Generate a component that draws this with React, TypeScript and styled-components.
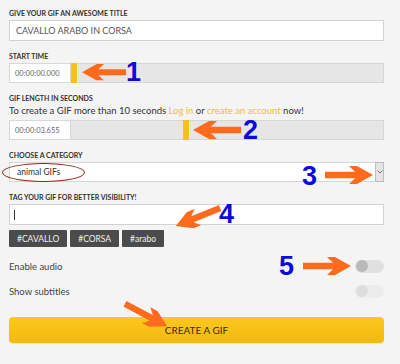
import styled, { createGlobalStyle } from "styled-components";

const GlobalStyle = createGlobalStyle`
  body {
    margin: 0;
    background: #f4f4f4;
    font-family: "Lato", "Open Sans", sans-serif;
  }
`;

const App = () => {
  return (
    <Page>
      <GlobalStyle />
      <Field>
        <Label>Give your GIF an awesome title</Label>
        <TextBox>CAVALLO ARABO IN CORSA</TextBox>
      </Field>

      <Field>
        <Label>Start time</Label>
        <SliderRow>
          <TimeBox>00:00:00.000</TimeBox>
          <Track>
            <Handle $left={0} />
          </Track>
        </SliderRow>
      </Field>

      <Field>
        <Label>GIF length in seconds</Label>
        <Helper>
          To create a GIF more than 10 seconds <Link>Log in</Link> or <Link>create an account</Link> now!
        </Helper>
        <SliderRow>
          <TimeBox>00:00:03.655</TimeBox>
          <Track>
            <Handle $left={112} />
          </Track>
        </SliderRow>
      </Field>

      <Field>
        <Label>Choose a category</Label>
        <SelectBox>
          <span>animal GIFs</span>
          <DropButton>
            <svg width="6" height="4" viewBox="0 0 6 4">
              <path d="M0.5 0.5 L3 3 L5.5 0.5" fill="none" stroke="#777" strokeWidth="1" />
            </svg>
          </DropButton>
        </SelectBox>
      </Field>

      <Field>
        <Label>Tag your GIF for better visibility!</Label>
        <TextBox>
          <Caret />
        </TextBox>
        <TagList>
          <Tag>#CAVALLO</Tag>
          <Tag>#CORSA</Tag>
          <Tag>#arabo</Tag>
        </TagList>
      </Field>

      <Options>
        <OptionRow>
          Enable audio
          <Toggle>
            <Knob />
          </Toggle>
        </OptionRow>
        <OptionRow>
          Show subtitles
          <Toggle $disabled>
            <Knob $disabled />
          </Toggle>
        </OptionRow>
      </Options>

      <CreateButton>CREATE A GIF</CreateButton>

      {/* annotations drawn on top of the screenshot */}
      <Ellipse />
      <Arrow $cx={104} $cy={72} $len={44} $angle={180} />
      <Num $x={126} $y={57}>1</Num>
      <Arrow $cx={217} $cy={130} $len={48} $angle={180} />
      <Num $x={243} $y={115}>2</Num>
      <Num $x={302} $y={161}>3</Num>
      <Arrow $cx={349} $cy={175} $len={48} $angle={0} />
      <Arrow $cx={198} $cy={217} $len={48} $angle={158} />
      <Num $x={219} $y={199}>4</Num>
      <Num $x={279} $y={251}>5</Num>
      <Arrow $cx={327} $cy={266} $len={48} $angle={0} />
      <Arrow $cx={146} $cy={315} $len={48} $angle={28} />
    </Page>
  );
};

const Arrow = ({ $cx, $cy, $len, $angle }: { $cx: number; $cy: number; $len: number; $angle: number }) => (
  <ArrowSvg $cx={$cx} $cy={$cy} $len={$len} $angle={$angle} viewBox="0 0 48 18" width={$len} height={($len * 18) / 48}>
    <path d="M0 5.8 H30 L24 0 H32 L48 9 L32 18 H24 L30 12.2 H0 Z" fill="#ff6a1c" />
  </ArrowSvg>
);

export default App;

const Page = styled.div`
  position: relative;
  box-sizing: border-box;
  width: 400px;
  height: 364px;
  padding: 9px 16px 0 9px;
  background: #f4f4f4;
  overflow: hidden;
  display: flex;
  flex-direction: column;
  gap: 11px;
`;

const Field = styled.div`
  display: flex;
  flex-direction: column;
  gap: 3px;
`;

const Label = styled.div`
  height: 8px;
  line-height: 8px;
  font-size: 7px;
  font-weight: 700;
  text-transform: uppercase;
  color: #333;
`;

const TextBox = styled.div`
  box-sizing: border-box;
  height: 21px;
  display: flex;
  align-items: center;
  padding-left: 6px;
  background: #fff;
  border: 1px solid #d2d2d2;
  font-size: 9px;
  color: #555;
`;

const Caret = styled.span`
  width: 1px;
  height: 10px;
  background: #333;
  margin-left: -2px;
`;

const SliderRow = styled.div`
  display: flex;
  height: 20px;
`;

const TimeBox = styled.div`
  box-sizing: border-box;
  width: 61px;
  display: flex;
  align-items: center;
  padding-left: 5px;
  background: #fff;
  border: 1px solid #d8d8d8;
  border-right: none;
  font-size: 7.5px;
  color: #666;
`;

const Track = styled.div`
  position: relative;
  flex: 1;
  background: #e6e6e6;
  border: 1px solid #d6d6d6;
`;

const Handle = styled.div<{ $left: number }>`
  position: absolute;
  top: -1px;
  bottom: -1px;
  left: ${({ $left }) => $left}px;
  width: 6px;
  background: #f6c21a;
`;

const Helper = styled.div`
  height: 12px;
  line-height: 12px;
  font-size: 9.5px;
  color: #333;
`;

const Link = styled.span`
  color: #f1b84a;
`;

const SelectBox = styled.div`
  box-sizing: border-box;
  height: 20px;
  display: flex;
  align-items: center;
  justify-content: space-between;
  padding-left: 7px;
  background: #fff;
  border: 1px solid #d6d6d6;
  font-size: 8.5px;
  color: #333;
`;

const DropButton = styled.div`
  box-sizing: border-box;
  width: 9px;
  height: 20px;
  margin-right: -1px;
  display: flex;
  align-items: center;
  justify-content: center;
  background: #e4e4e4;
  border: 1px solid #bcbcbc;
`;

const TagList = styled.div`
  display: flex;
  gap: 3px;
  margin-top: 2px;
`;

const Tag = styled.div`
  height: 17px;
  padding: 0 8px;
  display: flex;
  align-items: center;
  background: #4b4b4b;
  border-radius: 1px;
  color: #f0f0f0;
  font-size: 8.5px;
`;

const Options = styled.div`
  display: flex;
  flex-direction: column;
  gap: 9px;
`;

const OptionRow = styled.div`
  height: 16px;
  display: flex;
  align-items: center;
  justify-content: space-between;
  font-size: 9.5px;
  color: #444;
`;

const Toggle = styled.div<{ $disabled?: boolean }>`
  width: 29px;
  height: 13px;
  border-radius: 7px;
  background: ${({ $disabled }) => ($disabled ? "#ececec" : "#e0e0e0")};
  display: flex;
  align-items: center;
  padding-left: 1px;
  box-sizing: border-box;
`;

const Knob = styled.div<{ $disabled?: boolean }>`
  width: 12px;
  height: 12px;
  border-radius: 50%;
  background: ${({ $disabled }) => ($disabled ? "#dedede" : "#b9b9b9")};
`;

const CreateButton = styled.div`
  margin-top: 7px;
  height: 26px;
  border-radius: 4px;
  display: flex;
  align-items: center;
  justify-content: center;
  background: linear-gradient(#fbc81f, #f3b90f);
  color: #3b2a05;
  font-size: 10px;
  box-shadow: 0 1px 1px rgba(0, 0, 0, 0.08);
`;

const Ellipse = styled.div`
  position: absolute;
  left: 2px;
  top: 163px;
  width: 83px;
  height: 19px;
  border: 1.5px solid #8e2b1d;
  border-radius: 50%;
  box-sizing: border-box;
`;

const Num = styled.div<{ $x: number; $y: number }>`
  position: absolute;
  left: ${({ $x }) => $x}px;
  top: ${({ $y }) => $y}px;
  font-family: "Liberation Sans", Arial, sans-serif;
  font-weight: 700;
  font-size: 27px;
  line-height: 30px;
  color: #0a0adf;
`;

const ArrowSvg = styled.svg<{ $cx: number; $cy: number; $len: number; $angle: number }>`
  position: absolute;
  left: ${({ $cx, $len }) => $cx - $len / 2}px;
  top: ${({ $cy, $len }) => $cy - ($len * 18) / 96}px;
  transform: rotate(${({ $angle }) => $angle}deg);
`;
